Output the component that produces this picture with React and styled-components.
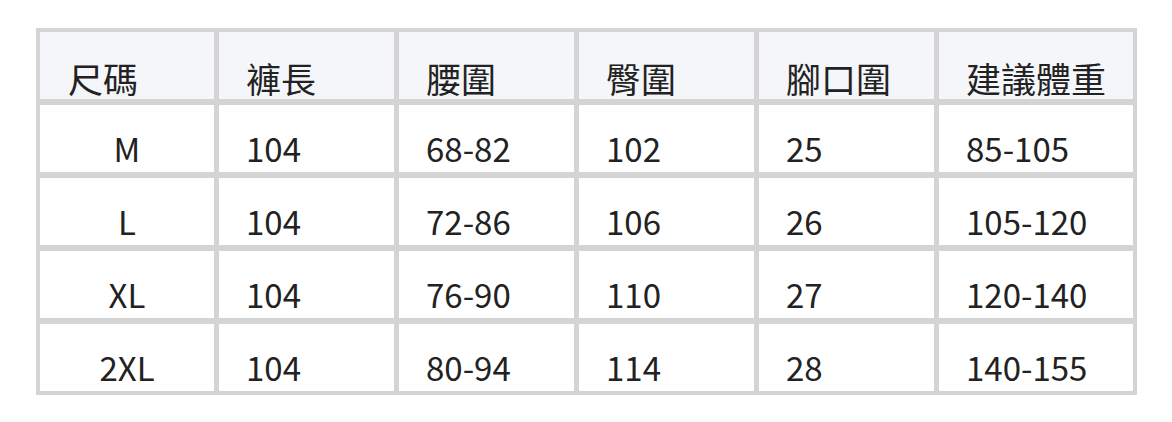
import React from 'react';
import styled, { createGlobalStyle } from 'styled-components';

const GlobalStyle = createGlobalStyle`
  html, body {
    margin: 0;
    padding: 0;
    background: #fff;
  }
  body {
    font-family: "Noto Sans CJK TC", "Noto Sans", sans-serif;
    color: #222;
  }
`;

const Page = styled.div`
  padding: 28px 0 0 36px;
`;

const Table = styled.div`
  display: grid;
  grid-template-columns: 174px 175px 175px 175px 175px 194px;
  grid-auto-rows: 67px;
  column-gap: 5px;
  row-gap: 6px;
  width: max-content;
  padding: 4px;
  background: #d4d4d4;
`;

const Cell = styled.div`
  background: ${(p) => (p.$head ? '#f5f6fa' : '#fff')};
  font-size: ${(p) => (p.$head ? '35px' : '33px')};
  line-height: 32px;
  padding-top: ${(p) => (p.$head ? '30px' : '27px')};
  padding-left: ${(p) => (p.$center ? '0' : p.$first ? '28px' : '27px')};
  text-align: ${(p) => (p.$center ? 'center' : 'left')};
  white-space: nowrap;
  box-sizing: border-box;
`;

const head = ['尺碼', '褲長', '腰圍', '臀圍', '腳口圍', '建議體重'];
const rows = [
  ['M', '104', '68-82', '102', '25', '85-105'],
  ['L', '104', '72-86', '106', '26', '105-120'],
  ['XL', '104', '76-90', '110', '27', '120-140'],
  ['2XL', '104', '80-94', '114', '28', '140-155'],
];

export default function App() {
  return (
    <>
      <GlobalStyle />
      <Page>
        <Table>
          {head.map((h, i) => (
            <Cell key={h} $head $first={i === 0}>
              {h}
            </Cell>
          ))}
          {rows.map((r) =>
            r.map((v, i) => (
              <Cell key={r[0] + i} $center={i === 0}>
                {v}
              </Cell>
            ))
          )}
        </Table>
      </Page>
    </>
  );
}
